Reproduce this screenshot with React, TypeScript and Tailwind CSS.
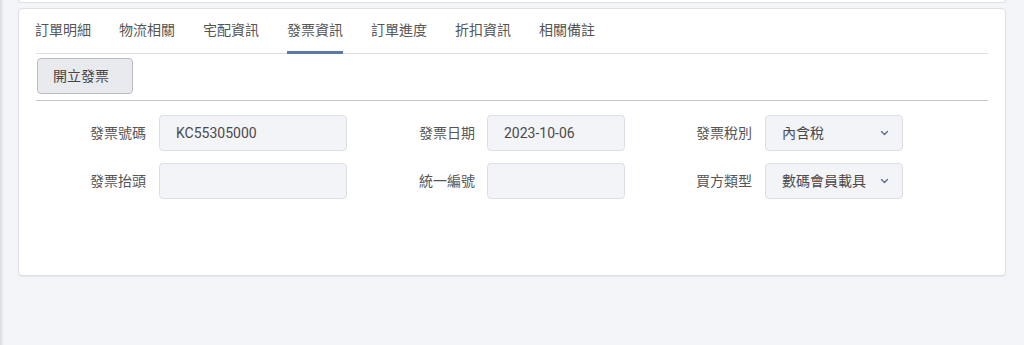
import React from "react";

const tabs = ["訂單明細", "物流相關", "宅配資訊", "發票資訊", "訂單進度", "折扣資訊", "相關備註"];

function Chevron() {
  return (
    <svg width="9" height="6" viewBox="0 0 9 6" fill="none">
      <path d="M1.5 1.5 L4.5 4.5 L7.5 1.5" stroke="#5b6786" strokeWidth="1.3" strokeLinecap="round" strokeLinejoin="round" />
    </svg>
  );
}

function Field({ value, w }: { value: string; w: string }) {
  return (
    <div className={`${w} h-[36px] flex items-center pl-[16px] rounded-[4px] border border-[#dcdde6] bg-[#f3f4f8] text-[14px] text-[#4a4a4a]`}>
      {value}
    </div>
  );
}

function Select({ value }: { value: string }) {
  return (
    <div className="w-[138px] h-[36px] flex items-center justify-between pl-[16px] pr-[13px] rounded-[4px] border border-[#dcdde6] bg-[#f3f4f8] text-[14px] text-[#4a4a4a]">
      <span>{value}</span>
      <Chevron />
    </div>
  );
}

function Label({ text, w }: { text: string; w: string }) {
  return <div className={`${w} text-right text-[14px] text-[#555]`}>{text}</div>;
}

export default function App() {
  return (
    <div
      className="w-[1024px] h-[345px] bg-[#f4f5f9] flex overflow-hidden"
      style={{ fontFamily: 'Roboto, "Noto Sans CJK TC", sans-serif' }}
    >
      <div className="w-[4px] h-full bg-linear-to-r from-[#dadade] to-[#f4f5f9]" />
      <div className="pl-[14px] flex flex-col">
        <div className="w-[988px] h-[3px] bg-white border-x border-b border-[#dfe0e6] rounded-b-[4px]" />
        <div className="mt-[5px] w-[988px] h-[268px] bg-white border border-[#dfe0e6] rounded-[4px] shadow-[0_1px_1px_rgba(0,0,0,0.06)] px-[17px]">
          <div className="flex gap-[28px] h-[45px] border-b border-[#dedee6]">
            {tabs.map((t, i) => (
              <div
                key={t}
                className={`h-[45px] flex items-center border-b-[3px] text-[14px] text-[#555] ${i === 0 ? "-ml-px" : ""} ${
                  t === "發票資訊" ? "border-[#5b7ba6]" : "border-transparent"
                }`}
              >
                {t}
              </div>
            ))}
          </div>
          <div className="mt-[4px] ml-px">
            <button className="w-[96px] h-[36px] rounded-[4px] border border-[#b9bcc3] bg-[#e9eaee] text-[14px] text-[#444] text-left pl-[15px]">
              開立發票
            </button>
          </div>
          <div className="mt-[6px] h-px bg-[#c6c6c8]" />
          <div className="mt-[14px] flex flex-col gap-[12px]">
            <div className="flex items-center">
              <Label text="發票號碼" w="w-[110px]" />
              <div className="ml-[13px]"><Field value="KC55305000" w="w-[188px]" /></div>
              <Label text="發票日期" w="w-[128px]" />
              <div className="ml-[12px]"><Field value="2023-10-06" w="w-[138px]" /></div>
              <Label text="發票稅別" w="w-[127px]" />
              <div className="ml-[13px]"><Select value="內含稅" /></div>
            </div>
            <div className="flex items-center">
              <Label text="發票抬頭" w="w-[110px]" />
              <div className="ml-[13px]"><Field value="" w="w-[188px]" /></div>
              <Label text="統一編號" w="w-[128px]" />
              <div className="ml-[12px]"><Field value="" w="w-[138px]" /></div>
              <Label text="買方類型" w="w-[127px]" />
              <div className="ml-[13px]"><Select value="數碼會員載具" /></div>
            </div>
          </div>
        </div>
      </div>
    </div>
  );
}
